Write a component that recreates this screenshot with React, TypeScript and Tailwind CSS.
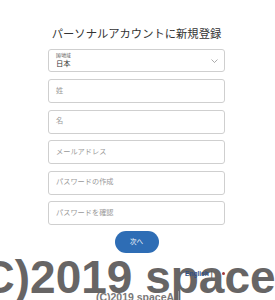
import React from 'react';

const jp = "font-['Liberation_Sans','Noto_Sans_CJK_JP',sans-serif]";

const fields = ['姓', '名', 'メールアドレス', 'パスワードの作成', 'パスワードを確認'];

const App: React.FC = () => {
  return (
    <div className={`w-[275px] h-[300px] overflow-hidden bg-white ${jp}`}>
      <div className="w-[177px] ml-[48px] pt-[27px] flex flex-col">
        <h1 className="text-[11.3px] leading-[14px] text-[#333] text-center font-normal whitespace-nowrap">
          パーソナルアカウントに新規登録
        </h1>
        <div className="mt-[8px] h-[23px] border border-[#cfcfcf] rounded-[3px] flex items-center justify-between pl-[7px] pr-[6px]">
          <div className="flex flex-col">
            <span className="text-[4.5px] leading-[6px] text-[#555]">国/地域</span>
            <span className="text-[7.3px] leading-[9px] text-[#333]">日本</span>
          </div>
          <svg width="7" height="4" viewBox="0 0 7 4" className="mt-[1px]">
            <path d="M0.5 0.5 L3.5 3.5 L6.5 0.5" fill="none" stroke="#888" strokeWidth="0.7" />
          </svg>
        </div>
        <div className="mt-[7px] flex flex-col gap-[6.5px]">
          {fields.map((f) => (
            <div
              key={f}
              className="h-[24px] border border-[#cfcfcf] rounded-[3px] flex items-center pl-[7px] text-[7.2px] text-[#999]"
            >
              {f}
            </div>
          ))}
        </div>
        <div className="mt-[5.5px] flex justify-center">
          <button className="w-[44px] h-[22px] rounded-full bg-[#2e6db5] text-white text-[6.5px] flex items-center justify-center">
            次へ
          </button>
        </div>
      </div>
      <div className="relative mt-[1px] h-[60px]">
        <div className="absolute left-1/2 top-0 -translate-x-1/2 whitespace-nowrap font-['Liberation_Sans',sans-serif] font-bold text-[46px] leading-[46px] text-[#676565]">
          (C)2019 spaceA
        </div>
        <div className="absolute left-[185px] top-[16px] flex items-center gap-[2px] text-[6.6px] leading-[8px] font-bold text-[#2f4f86] font-['Liberation_Sans',sans-serif]">
          <span>English</span>
          <span className="text-[#555]">|</span>
          <span className="ml-[7px] w-[3px] h-[3px] rounded-full bg-[#a33a3a]" />
        </div>
        <div className="absolute left-0 right-0 top-[37px] flex justify-center">
          <span className="font-['Liberation_Sans',sans-serif] font-bold text-[10.5px] leading-[12px] text-[#7a7878]">
            (C)2019 spaceA
          </span>
          <span className="ml-[4px] w-px h-[12px] bg-[#999]" />
        </div>
      </div>
    </div>
  );
};

export default App;
